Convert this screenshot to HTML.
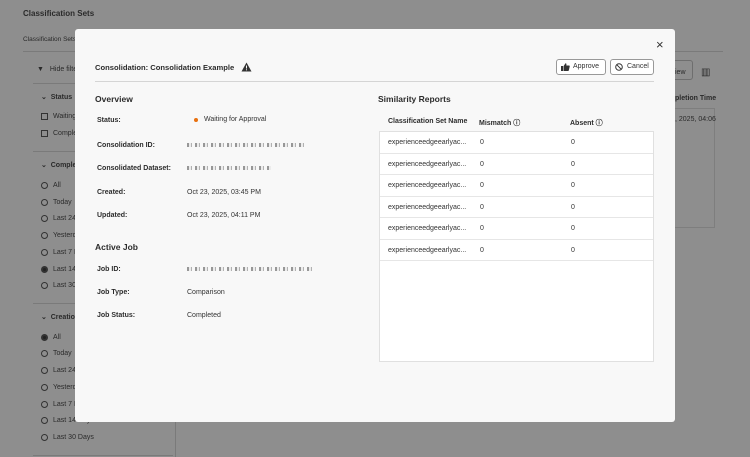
<!DOCTYPE html>
<html><head><style>
*{margin:0;padding:0;box-sizing:border-box}
body{width:750px;height:457px;overflow:hidden;background:#8e8e8e;font-family:"Liberation Sans",sans-serif;color:#222;position:relative}
.a{position:absolute;white-space:nowrap}
.bg{color:#2a2a2a;font-size:7px}
.m{position:absolute;left:75px;top:29px;width:600px;height:393px;background:#f8f8f8;border-radius:3px}
.l{font-size:7px;font-weight:bold;color:#2c2c2c}
.v{font-size:7px;color:#333}
.h{font-size:8.5px;font-weight:bold;color:#2c2c2c}
.blur{position:absolute;height:4px;background:repeating-linear-gradient(90deg,#777 0 2px,#e8e8e8 2px 4px,#999 4px 5px,#f8f8f8 5px 8px);opacity:.75}
.rad{position:absolute;width:7px;height:7px;border:1px solid #333;border-radius:50%}
.chk{position:absolute;width:7px;height:7px;border:1px solid #333}
</style></head><body>
<div class="a bg" style="left:23px;top:9px;font-size:8px;font-weight:bold">Classification Sets</div>
<div class="a bg" style="left:23px;top:36px;font-size:6.5px">Classification Sets</div>
<div style="position:absolute;left:23px;top:51px;width:700px;height:1px;background:#7a7a7a"></div>
<div class="a bg" style="left:37px;top:66px">▼ <span style="margin-left:4px">Hide filters</span></div>
<div style="position:absolute;left:33px;top:83px;width:140px;height:1px;background:#7a7a7a"></div>
<div class="a bg" style="left:41px;top:93px;font-weight:bold">⌄&nbsp; Status</div>
<div class="chk" style="left:41px;top:113px"></div><div class="a bg" style="left:53px;top:113px">Waiting</div>
<div class="chk" style="left:41px;top:130px"></div><div class="a bg" style="left:53px;top:130px">Complete</div>
<div style="position:absolute;left:33px;top:151px;width:140px;height:1px;background:#7a7a7a"></div>
<div class="a bg" style="left:41px;top:161px;font-weight:bold">⌄&nbsp; Completion</div>
<div class="rad" style="left:41px;top:182px"></div><div class="a bg" style="left:53px;top:182px">All</div>
<div class="rad" style="left:41px;top:199px"></div><div class="a bg" style="left:53px;top:199px">Today</div>
<div class="rad" style="left:41px;top:215px"></div><div class="a bg" style="left:53px;top:215px">Last 24</div>
<div class="rad" style="left:41px;top:232px"></div><div class="a bg" style="left:53px;top:232px">Yesterday</div>
<div class="rad" style="left:41px;top:249px"></div><div class="a bg" style="left:53px;top:249px">Last 7 D</div>
<div class="rad" style="left:41px;top:266px;background:#222;border-width:2px"></div><div class="a bg" style="left:53px;top:266px">Last 14</div>
<div class="rad" style="left:41px;top:282px"></div><div class="a bg" style="left:53px;top:282px">Last 30</div>
<div style="position:absolute;left:33px;top:303px;width:140px;height:1px;background:#7a7a7a"></div>
<div class="a bg" style="left:41px;top:313px;font-weight:bold">⌄&nbsp; Creation</div>
<div class="rad" style="left:41px;top:334px;background:#222;border-width:2px"></div><div class="a bg" style="left:53px;top:334px">All</div>
<div class="rad" style="left:41px;top:350px"></div><div class="a bg" style="left:53px;top:350px">Today</div>
<div class="rad" style="left:41px;top:367px"></div><div class="a bg" style="left:53px;top:367px">Last 24</div>
<div class="rad" style="left:41px;top:384px"></div><div class="a bg" style="left:53px;top:384px">Yesterday</div>
<div class="rad" style="left:41px;top:401px"></div><div class="a bg" style="left:53px;top:401px">Last 7 D</div>
<div class="rad" style="left:41px;top:417px"></div><div class="a bg" style="left:53px;top:417px">Last 14 Days</div>
<div class="rad" style="left:41px;top:434px"></div><div class="a bg" style="left:53px;top:434px">Last 30 Days</div>
<div style="position:absolute;left:33px;top:455px;width:140px;height:1px;background:#7a7a7a"></div>
<div style="position:absolute;left:175px;top:83px;width:1px;height:374px;background:#7a7a7a"></div>
<div style="position:absolute;left:650px;top:60px;width:43px;height:20px;border:1px solid #6e6e6e;border-radius:3px"></div>
<div class="a bg" style="left:675px;top:69px">iew</div>
<div class="a bg" style="left:701px;top:67px;font-size:10px">▥</div>
<div class="a bg" style="left:675px;top:95px;font-weight:bold">pletion Time</div>
<div style="position:absolute;left:675px;top:108px;width:40px;height:120px;border:1px solid #7e7e7e;border-left:none"></div>
<div class="a bg" style="left:675px;top:116px">, 2025, 04:06</div>

<div class="m">
<div class="a" style="left:581px;top:8px;font-size:13px;color:#333">×</div>
<div class="a h" style="left:20px;top:34px;font-size:7.6px">Consolidation: Consolidation Example</div>
<svg class="a" style="left:166px;top:33px" width="11" height="10" viewBox="0 0 11 10"><path d="M5.5 0.5L10.5 9.5H0.5Z" fill="#333"/><rect x="5" y="3.5" width="1" height="3" fill="#f8f8f8"/><rect x="5" y="7.3" width="1" height="1" fill="#f8f8f8"/></svg>
<div style="position:absolute;left:481px;top:30px;width:50px;height:16px;border:1px solid #999;border-radius:3px;background:#fff"></div>
<svg class="a" style="left:486px;top:34px" width="9" height="8" viewBox="0 0 9 8"><rect x="0" y="3" width="2" height="5" fill="#333"/><path d="M2.5 3.2L4.5 0.3Q5.8 0.4 5.3 2.5H8.2Q9 2.7 8.7 3.6L7.8 7.4Q7.6 8 7 8H2.5Z" fill="#333"/></svg>
<div class="a v" style="left:498px;top:34px">Approve</div>
<div style="position:absolute;left:535px;top:30px;width:44px;height:16px;border:1px solid #999;border-radius:3px;background:#fff"></div>
<svg class="a" style="left:540px;top:34px" width="8" height="8" viewBox="0 0 8 8"><circle cx="4" cy="4" r="3.3" fill="none" stroke="#333" stroke-width="1"/><path d="M1.7 1.7L6.3 6.3" stroke="#333"/></svg>
<div class="a v" style="left:552px;top:34px">Cancel</div>
<div style="position:absolute;left:20px;top:52px;width:559px;height:1px;background:#d5d5d5"></div>

<div class="a h" style="left:20px;top:65px">Overview</div>
<div class="a l" style="left:22px;top:88px">Status:</div>
<div style="position:absolute;left:119px;top:89px;width:4px;height:4px;border-radius:50%;background:#e8700f"></div>
<div class="a v" style="left:129px;top:87px">Waiting for Approval</div>
<div class="a l" style="left:22px;top:113px">Consolidation ID:</div>
<div class="blur" style="left:112px;top:114px;width:120px"></div>
<div class="a l" style="left:22px;top:136px">Consolidated Dataset:</div>
<div class="blur" style="left:112px;top:137px;width:84px"></div>
<div class="a l" style="left:22px;top:160px">Created:</div>
<div class="a v" style="left:112px;top:160px">Oct 23, 2025, 03:45 PM</div>
<div class="a l" style="left:22px;top:183px">Updated:</div>
<div class="a v" style="left:112px;top:183px">Oct 23, 2025, 04:11 PM</div>
<div class="a h" style="left:20px;top:213px">Active Job</div>
<div class="a l" style="left:22px;top:237px">Job ID:</div>
<div class="blur" style="left:112px;top:238px;width:126px"></div>
<div class="a l" style="left:22px;top:260px">Job Type:</div>
<div class="a v" style="left:112px;top:260px">Comparison</div>
<div class="a l" style="left:22px;top:283px">Job Status:</div>
<div class="a v" style="left:112px;top:283px">Completed</div>

<div class="a h" style="left:303px;top:65px">Similarity Reports</div>
<div class="a l" style="left:313px;top:89px">Classification Set Name</div>
<div class="a l" style="left:404px;top:89px">Mismatch ⓘ</div>
<div class="a l" style="left:495px;top:89px">Absent ⓘ</div>
<div style="position:absolute;left:304px;top:102px;width:275px;height:231px;border:1px solid #e0e0e0;background:#fff">
 <div style="height:21.5px;border-bottom:1px solid #e6e6e6;position:relative"><span class="a v" style="left:8px;top:7px">experienceedgeearlyac...</span><span class="a v" style="left:100px;top:7px">0</span><span class="a v" style="left:191px;top:7px">0</span></div>
 <div style="height:21.5px;border-bottom:1px solid #e6e6e6;position:relative"><span class="a v" style="left:8px;top:7px">experienceedgeearlyac...</span><span class="a v" style="left:100px;top:7px">0</span><span class="a v" style="left:191px;top:7px">0</span></div>
 <div style="height:21.5px;border-bottom:1px solid #e6e6e6;position:relative"><span class="a v" style="left:8px;top:7px">experienceedgeearlyac...</span><span class="a v" style="left:100px;top:7px">0</span><span class="a v" style="left:191px;top:7px">0</span></div>
 <div style="height:21.5px;border-bottom:1px solid #e6e6e6;position:relative"><span class="a v" style="left:8px;top:7px">experienceedgeearlyac...</span><span class="a v" style="left:100px;top:7px">0</span><span class="a v" style="left:191px;top:7px">0</span></div>
 <div style="height:21.5px;border-bottom:1px solid #e6e6e6;position:relative"><span class="a v" style="left:8px;top:7px">experienceedgeearlyac...</span><span class="a v" style="left:100px;top:7px">0</span><span class="a v" style="left:191px;top:7px">0</span></div>
 <div style="height:21.5px;border-bottom:1px solid #e6e6e6;position:relative"><span class="a v" style="left:8px;top:7px">experienceedgeearlyac...</span><span class="a v" style="left:100px;top:7px">0</span><span class="a v" style="left:191px;top:7px">0</span></div>
</div>
</div>
</body></html>
